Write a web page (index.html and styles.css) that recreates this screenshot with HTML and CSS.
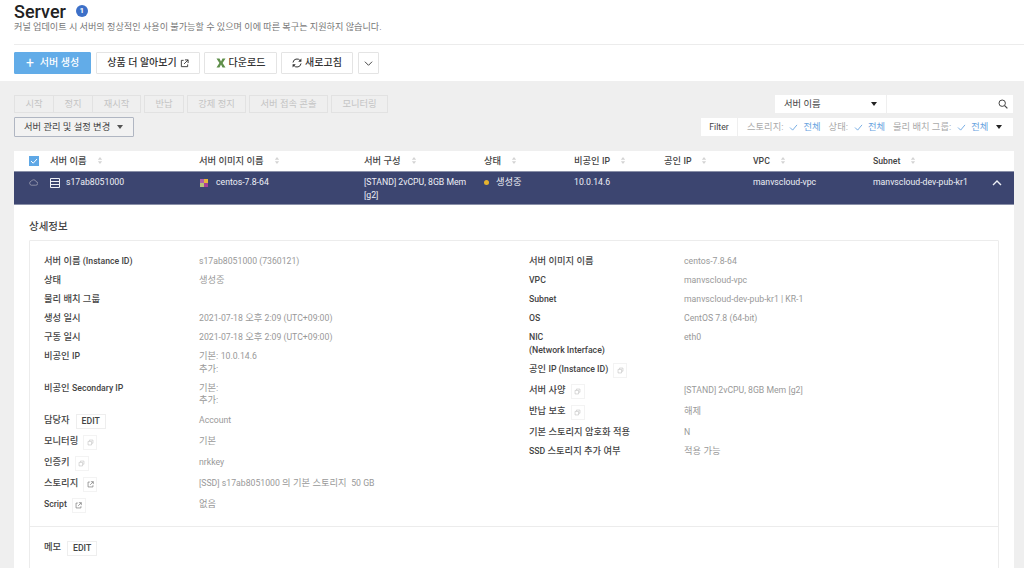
FILE: index.html
```html
<!DOCTYPE html>
<html lang="ko">
<head>
    <meta charset="UTF-8">
    <title>Server</title>
    <link rel="stylesheet" href="styles.css">
</head>
<body>
<svg class="defs" width="0" height="0">
    <symbol id="ext" viewBox="0 0 10 10"><path d="M8.5 6v2.5h-7v-7H4M5.5 1h3.5v3.5M9 1L4.5 5.5" fill="none" stroke="currentColor"/></symbol>
    <symbol id="copy" viewBox="0 0 10 10"><path d="M3.5 3V1.5h5v4.5H7M1.5 3.5h5v5h-5z" fill="none" stroke="currentColor" stroke-width=".8"/></symbol>
    <symbol id="sort" viewBox="0 0 7 10"><path d="M3.5 1L6 4H1zM3.5 9L1 6h5z" fill="currentColor"/></symbol>
</svg>

<header class="page-head">
    <div class="title-row">
        <h1>Server</h1>
        <span class="badge">1</span>
    </div>
    <p class="notice">커널 업데이트 시 서버의 정상적인 사용이 불가능할 수 있으며 이에 따른 복구는 지원하지 않습니다.</p>
    <div class="toolbar">
        <button class="btn primary"><span class="plus">+</span>서버 생성</button>
        <button class="btn wide">상품 더 알아보기 <svg class="ic"><use href="#ext"/></svg></button>
        <button class="btn dl"><svg class="ic excel" viewBox="0 0 10 10"><path d="M.5 .5h3L5 3.4 6.5 .5h3L6.6 5l2.9 4.5h-3L5 6.6 3.5 9.5h-3L3.4 5z" fill="currentColor"/></svg>다운로드</button>
        <button class="btn refresh"><svg class="ic" viewBox="0 0 10 10"><path d="M1 4.5A4 4 0 0 1 8.2 2.6M9 5.5A4 4 0 0 1 1.8 7.4" fill="none" stroke="currentColor"/><path d="M9.4 .6v3.2H6.2zM.6 9.4V6.2h3.2z" fill="currentColor"/></svg>새로고침</button>
        <button class="btn more"><svg class="ic" viewBox="0 0 10 10"><path d="M1 3l4 4 4-4" fill="none" stroke="currentColor"/></svg></button>
    </div>
</header>

<main class="content">
    <div class="controls">
        <div class="actions">
            <div class="action-row">
                <div class="group">
                    <span class="act w1">시작</span><span class="act w1">정지</span><span class="act w2">재시작</span>
                </div>
                <span class="act w3">반납</span>
                <span class="act w4">강제 정지</span>
                <span class="act w5">서버 접속 콘솔</span>
                <span class="act w6">모니터링</span>
            </div>
            <button class="manage">서버 관리 및 설정 변경<i class="caret"></i></button>
        </div>
        <div class="search-side">
            <div class="search">
                <div class="search-select">서버 이름<i class="caret dark"></i></div>
                <div class="search-input"><svg class="ic" viewBox="0 0 10 10"><circle cx="4.2" cy="4.2" r="3.2" fill="none" stroke="currentColor"/><path d="M6.6 6.6L9.4 9.4" stroke="currentColor" stroke-width="1.2"/></svg></div>
            </div>
            <div class="filter">
                <span class="filter-label en">Filter</span>
                <div class="filter-items">
                    <span>스토리지:</span><svg class="check" viewBox="0 0 10 8"><path d="M1 4l3 3 5-6" fill="none" stroke="currentColor"/></svg><b>전체</b>
                    <span class="next">상태:</span><svg class="check" viewBox="0 0 10 8"><path d="M1 4l3 3 5-6" fill="none" stroke="currentColor"/></svg><b>전체</b>
                    <span class="next">물리 배치 그룹:</span><svg class="check" viewBox="0 0 10 8"><path d="M1 4l3 3 5-6" fill="none" stroke="currentColor"/></svg><b>전체</b>
                    <i class="caret dark"></i>
                </div>
            </div>
        </div>
    </div>

    <section class="table">
        <div class="cols head">
            <div class="chk-cell"><svg class="chk" viewBox="0 0 10 10"><rect width="10" height="10" fill="#5fa8e6"/><path d="M2 5l2.2 2.2L8 3" fill="none" stroke="#fff"/></svg></div>
            <div>서버 이름<svg class="sort"><use href="#sort"/></svg></div>
            <div>서버 이미지 이름<svg class="sort"><use href="#sort"/></svg></div>
            <div>서버 구성<svg class="sort"><use href="#sort"/></svg></div>
            <div>상태<svg class="sort"><use href="#sort"/></svg></div>
            <div>비공인 <span class="en">IP</span><svg class="sort"><use href="#sort"/></svg></div>
            <div>공인 <span class="en">IP</span><svg class="sort"><use href="#sort"/></svg></div>
            <div class="en">VPC<svg class="sort"><use href="#sort"/></svg></div>
            <div class="en">Subnet<svg class="sort"><use href="#sort"/></svg></div>
        </div>
        <div class="cols selected">
            <div class="chk-cell"><svg class="cloud" viewBox="0 0 10 7"><path d="M2.5 6.5h5a2 2 0 0 0 .3-4A2.8 2.8 0 0 0 2.6 2 2.3 2.3 0 0 0 2.5 6.5z" fill="none" stroke="currentColor" stroke-width=".8"/></svg></div>
            <div class="name-cell en"><svg class="srv" viewBox="0 0 10 10"><path d="M.5.5h9v9h-9zM.5 3.5h9M.5 6.5h9" fill="none" stroke="currentColor"/></svg>s17ab8051000</div>
            <div class="name-cell en"><svg class="os" viewBox="0 0 10 10"><rect x="1" y="1" width="4" height="4" fill="#b060a8"/><rect x="5" y="1" width="4" height="4" fill="#e6b73c"/><rect x="5" y="5" width="4" height="4" fill="#a83f96"/><rect x="1" y="5" width="4" height="4" fill="#b9c27a"/></svg>centos-7.8-64</div>
            <div class="config en">[STAND] 2vCPU, 8GB Mem [g2]</div>
            <div class="name-cell"><i class="dot"></i>생성중</div>
            <div class="en">10.0.14.6</div>
            <div></div>
            <div class="en">manvscloud-vpc</div>
            <div class="subnet en">manvscloud-dev-pub-kr1<svg class="up" viewBox="0 0 10 6"><path d="M1 5l4-4 4 4" fill="none" stroke="currentColor" stroke-width="1.4"/></svg></div>
        </div>

        <div class="detail">
            <h2>상세정보</h2>
            <div class="box">
                <div class="info">
                    <dl>
                        <div class="row"><dt>서버 이름 <span class="en">(Instance ID)</span></dt><dd class="en">s17ab8051000 (7360121)</dd></div>
                        <div class="row"><dt>상태</dt><dd>생성중</dd></div>
                        <div class="row"><dt>물리 배치 그룹</dt><dd></dd></div>
                        <div class="row"><dt>생성 일시</dt><dd><span class="en">2021-07-18</span> 오후 <span class="en">2:09 (UTC+09:00)</span></dd></div>
                        <div class="row"><dt>구동 일시</dt><dd><span class="en">2021-07-18</span> 오후 <span class="en">2:09 (UTC+09:00)</span></dd></div>
                        <div class="row"><dt>비공인 <span class="en">IP</span></dt><dd>기본: <span class="en">10.0.14.6</span><br>추가:</dd></div>
                        <div class="row spaced"><dt>비공인 <span class="en">Secondary IP</span></dt><dd>기본:<br>추가:</dd></div>
                        <div class="row tall"><dt>담당자<span class="mini text">EDIT</span></dt><dd class="en">Account</dd></div>
                        <div class="row tall"><dt>모니터링<span class="mini"><svg class="ic faint"><use href="#copy"/></svg></span></dt><dd>기본</dd></div>
                        <div class="row tall"><dt>인증키<span class="mini"><svg class="ic faint"><use href="#copy"/></svg></span></dt><dd class="en">nrkkey</dd></div>
                        <div class="row tall"><dt>스토리지<span class="mini"><svg class="ic"><use href="#ext"/></svg></span></dt><dd><span class="en">[SSD] s17ab8051000</span> 의 기본 스토리지 &nbsp;<span class="en">50 GB</span></dd></div>
                        <div class="row tall"><dt><span class="en">Script</span><span class="mini"><svg class="ic"><use href="#ext"/></svg></span></dt><dd>없음</dd></div>
                    </dl>
                    <dl>
                        <div class="row"><dt>서버 이미지 이름</dt><dd class="en">centos-7.8-64</dd></div>
                        <div class="row"><dt class="en">VPC</dt><dd class="en">manvscloud-vpc</dd></div>
                        <div class="row"><dt class="en">Subnet</dt><dd class="en">manvscloud-dev-pub-kr1 | KR-1</dd></div>
                        <div class="row"><dt class="en">OS</dt><dd class="en">CentOS 7.8 (64-bit)</dd></div>
                        <div class="row"><dt class="en">NIC<br>(Network Interface)</dt><dd class="en">eth0</dd></div>
                        <div class="row tall"><dt>공인 <span class="en">IP (Instance ID)</span><span class="mini"><svg class="ic faint"><use href="#copy"/></svg></span></dt><dd></dd></div>
                        <div class="row tall"><dt>서버 사양<span class="mini"><svg class="ic faint"><use href="#copy"/></svg></span></dt><dd class="en">[STAND] 2vCPU, 8GB Mem [g2]</dd></div>
                        <div class="row tall"><dt>반납 보호<span class="mini"><svg class="ic faint"><use href="#copy"/></svg></span></dt><dd>해제</dd></div>
                        <div class="row"><dt>기본 스토리지 암호화 적용</dt><dd class="en">N</dd></div>
                        <div class="row"><dt><span class="en">SSD</span> 스토리지 추가 여부</dt><dd>적용 가능</dd></div>
                    </dl>
                </div>
                <div class="memo"><div class="row tall"><dt>메모<span class="mini text">EDIT</span></dt></div></div>
            </div>
        </div>
    </section>
</main>
</body>
</html>
```

FILE: styles.css
```css
* { box-sizing: border-box; }
html, body { height: 568px; overflow: hidden; }
body { margin: 0; background: #fff; color: #333; font-family: Roboto, "Noto Sans CJK KR", sans-serif; font-size: 9.3px; line-height: 12.5px; }
.defs { position: absolute; }
.ic { width: 9px; height: 9px; flex: none; }
/* latin runs sit smaller next to the korean text */
.en { font-size: 8.7px; }

/* --- page head --- */
.page-head { height: 81px; padding: 0 0 0 14px; }
.title-row { display: flex; align-items: center; height: 21px; padding-top: 1px; }
h1 { margin: 0; font-size: 18px; line-height: 21px; font-weight: 500; color: #222; }
.badge { width: 12px; height: 12px; margin: 0 0 0 10px; border-radius: 50%; background: #3d70c8; color: #fff; font-size: 8px; line-height: 12px; font-weight: 700; text-align: center; }
.notice { margin: 0; height: 24px; padding-top: 0; font-size: 9.15px; line-height: 13px; color: #777; border-bottom: 1px solid #ececec; }
.toolbar { display: flex; gap: 4px; margin-top: 7px; }
.btn { display: flex; align-items: center; justify-content: center; gap: 3px; height: 22px; min-width: 72px; padding: 0 10px; background: #fff; border: 1px solid #e4e4e4; border-radius: 1px; font: inherit; font-size: 10px; font-weight: 500; color: #333; }
.btn.primary { width: 77px; margin-right: 1px; background: #62ace8; border-color: #62ace8; color: #fff; gap: 6px; }
.plus { font-size: 14px; font-weight: 400; }
.btn.wide { width: 104px; }
.btn.dl { width: 73px; }
.btn.refresh { margin-right: 1px; }
.btn.more { min-width: 21px; width: 21px; padding: 0; }
.excel { width: 10px; height: 10px; color: #5f8f4a; }
.refresh .ic { width: 10px; height: 10px; }

/* --- content area --- */
.content { height: 487px; background: #efefef; padding: 14px 11px 0 14px; overflow: hidden; }
.controls { display: flex; justify-content: space-between; height: 56px; }
.action-row { display: flex; gap: 3px; height: 18px; }
.group { display: flex; }
.act { display: flex; align-items: center; justify-content: center; height: 18px; border: 1px solid #e2e2e2; color: #c4c4c4; }
.group .act + .act { margin-left: -1px; }
.w1 { width: 40px; }
.w2 { width: 49px; }
.w3 { width: 40px; }
.w4 { width: 59px; }
.w5 { width: 79px; }
.w6 { width: 57px; }
.manage { display: flex; align-items: center; justify-content: space-between; width: 120px; height: 20px; margin-top: 4px; padding: 0 10px 0 9px; background: #f2f2f2; border: 1px solid #b0b6c2; border-radius: 1px; font: inherit; color: #444; }
.caret { width: 0; height: 0; border: 3px solid transparent; border-top: 4px solid #555; border-bottom: 0; }
.caret.dark { border-top-color: #222; }
.search-side { display: flex; flex-direction: column; align-items: flex-end; gap: 5px; }
.search { display: flex; gap: 1px; width: 238px; height: 18px; }
.search-select { display: flex; align-items: center; justify-content: space-between; width: 111px; padding: 0 9px; background: #fff; color: #444; }
.search-input { flex: 1; display: flex; align-items: center; justify-content: flex-end; padding-right: 5px; background: #fff; color: #444; }
.search-input .ic { width: 10px; height: 10px; }
.filter { display: flex; gap: 1px; height: 18px; width: 312px; }
.filter-label { width: 36px; background: #fff; text-align: center; line-height: 18px; color: #444; }
.filter-items { flex: 1; display: flex; align-items: center; padding: 0 11px 0 9px; background: #fff; color: #aaa; white-space: nowrap; }
.filter-items b { font-weight: 400; color: #68a3e0; margin-left: 5px; }
.filter-items .next { margin-left: 8px; }
.check { width: 9px; height: 7px; margin-left: 6px; color: #68a3e0; }
.filter-items .caret { margin-left: auto; }

/* --- table --- */
.table { width: 1000px; height: 417px; }
.cols { display: grid; grid-template-columns: 36px 149px 165px 120px 90px 90px 89px 120px 141px; }
.head { height: 20px; align-items: center; background: #fff; font-weight: 500; color: #444; }
.sort { width: 6px; height: 9px; margin-left: 10px; vertical-align: -1px; color: #d4d4d4; }
.chk-cell { padding-left: 15px; display: flex; align-items: center; }
.chk { width: 10px; height: 10px; }
.selected { height: 34px; padding-top: 4px; background: #3c4570; border-top: 1px solid #8a90a8; border-bottom: 1px solid #8a90a8; color: #eef0f6; }
.selected .chk-cell { height: 13px; }
.cloud { width: 9px; height: 7px; color: #aab; }
.name-cell { display: flex; align-items: center; height: 13px; }
.srv { width: 10px; height: 10px; margin-right: 6px; }
.os { width: 10px; height: 10px; margin-right: 7px; }
.dot { width: 5px; height: 5px; margin-right: 7px; border-radius: 50%; background: #e6b32e; }
.config { padding-right: 14px; }
.subnet { display: flex; align-items: flex-start; justify-content: space-between; padding-right: 12px; }
.up { width: 10px; height: 6px; margin-top: 4px; }

/* --- detail --- */
.detail { height: 363px; background: #fff; padding: 15px 15px 0; }
h2 { margin: 0 0 7px; font-size: 10.5px; line-height: 13px; font-weight: 500; color: #444; }
.box { border: 1px solid #ececec; border-radius: 1px; padding-top: 11px; height: 400px; }
.info { display: grid; grid-template-columns: 485px 1fr; padding-left: 14px; border-bottom: 1px solid #ececec; height: 275px; }
dl { margin: 0; }
.row { display: flex; padding: 3.25px 0; }
.row.spaced { padding-bottom: 4.25px; }
.row.tall { padding: 3px 0; align-items: flex-start; }
dt { width: 155px; font-weight: 500; color: #444; white-space: nowrap; }
dd { margin: 0; color: #999; white-space: nowrap; }
.mini { display: inline-flex; align-items: center; justify-content: center; height: 15px; min-width: 14px; margin-left: 5px; border: 1px solid #f3f3f3; vertical-align: top; }
.mini.text { width: 30px; margin-left: 6px; font-size: 8.7px; color: #444; border-color: #eee; }
.mini .ic { width: 7px; height: 7px; color: #777; }
.mini .faint { color: #bbb; }
.memo { padding: 11px 14px 0; }
```
